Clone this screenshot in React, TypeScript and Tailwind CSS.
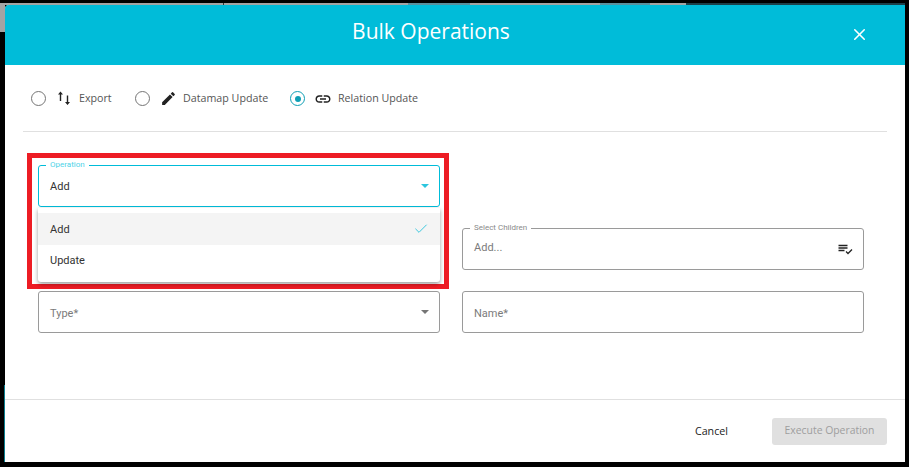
import { Check, X } from "lucide-react";

function Caret({ className }: { className: string }) {
  return (
    <svg width="8" height="4" viewBox="0 0 8 4" className={className}>
      <path d="M0 0h8L4 4z" fill="currentColor" />
    </svg>
  );
}

function Radio({ checked }: { checked?: boolean }) {
  return (
    <span
      className={`flex h-[15px] w-[15px] items-center justify-center rounded-full border ${
        checked ? "border-[#0f9fb5]" : "border-[#757575]"
      }`}
    >
      {checked && <span className="h-[6px] w-[6px] rounded-full bg-[#0f9fb5]" />}
    </span>
  );
}

function RadioItem({
  label,
  checked,
  icon,
  className,
}: {
  label: string;
  checked?: boolean;
  icon: React.ReactNode;
  className: string;
}) {
  return (
    <div className={`flex items-center ${className}`}>
      <Radio checked={checked} />
      <span className="ml-[9px] flex w-[18px] justify-center">{icon}</span>
      <span className="ml-[6px] text-[10.7px] text-[#555555]">{label}</span>
    </div>
  );
}

function Field({
  label,
  text,
  right,
  focused,
  muted,
  textClass,
}: {
  label?: string;
  text: string;
  right?: React.ReactNode;
  focused?: boolean;
  muted?: boolean;
  textClass: string;
}) {
  return (
    <div
      className={`relative flex h-[42px] items-center justify-between rounded-[3px] border pl-[11px] pr-[10px] ${
        focused ? "border-[#00bcd9]" : "border-[#9a9a9a]"
      }`}
    >
      {label && (
        <span
          className={`absolute -top-[6px] left-[7px] bg-white px-[4px] text-[8px] leading-[10px] ${
            focused ? "text-[#4fd3e8]" : "text-[#8a8a8a]"
          }`}
        >
          {label}
        </span>
      )}
      <span className={`text-[11px] ${textClass} ${muted ? "text-[#7b7b7b]" : "text-[#333333]"}`}>{text}</span>
      {right}
    </div>
  );
}

export default function App() {
  return (
    <div className="relative h-[467px] w-[909px] overflow-hidden bg-black font-['Roboto',sans-serif]">
      {/* backdrop showing through */}
      <div className="absolute left-0 top-[3px] flex h-[2px] w-[905px] bg-[#a3a3a3]">
        <span className="ml-[223px] w-[1px] bg-[#333333]" />
        <span className="ml-[184px] w-[62px] bg-[#5a8f9c]" />
        <span className="ml-[130px] w-[50px] bg-[#5a8f9c]" />
        <span className="ml-[36px] w-[219px] bg-[#1d3f48]" />
      </div>
      <div className="absolute left-0 top-[3px] h-[29px] w-[5px] bg-[#a3a3a3]" />
      <div className="absolute left-[4px] top-[385px] h-[77px] w-[1px] bg-[#0c7f90]" />

      <div className="relative ml-[5px] mt-[5px] flex h-[457px] w-[900px] flex-col overflow-hidden rounded-tl-[4px] bg-white">
        <header className="relative flex h-[60px] shrink-0 items-center justify-center bg-[#00bcd9] pb-[6px] pr-[48px] font-['Open_Sans',sans-serif] text-[21px] text-white">
          Bulk Operations
          <X size={19} strokeWidth={2} className="absolute right-[36px] top-[20px] text-white" />
        </header>

        <div className="mx-[18px] flex h-[67px] shrink-0 items-center border-b border-[#e0e0e0] pl-[8px] pt-[1px] font-['Open_Sans',sans-serif]">
          <RadioItem
            label="Export"
            className="w-[104px]"
            icon={
              <svg width="14" height="15" viewBox="0 0 14 15">
                <path
                  d="M3.5 .5 1 3.6h1.8V10h1.4V3.6H6zM10.5 14 13 10.9h-1.8V4.5H9.8v6.4H8z"
                  fill="#222222"
                />
              </svg>
            }
          />
          <RadioItem
            label="Datamap Update"
            className="w-[155px]"
            icon={
              <svg width="17" height="17" viewBox="0 0 24 24" fill="#222222">
                <path d="M3 17.25V21h3.75L17.81 9.94l-3.75-3.75L3 17.25zM20.71 7.04a1 1 0 0 0 0-1.41l-2.34-2.34a1 1 0 0 0-1.41 0l-1.83 1.83 3.75 3.75 1.83-1.83z" />
              </svg>
            }
          />
          <RadioItem
            label="Relation Update"
            checked
            className=""
            icon={
              <svg width="18" height="18" viewBox="0 0 24 24" fill="#222222">
                <path d="M3.9 12c0-1.71 1.39-3.1 3.1-3.1h4V7H7c-2.76 0-5 2.24-5 5s2.24 5 5 5h4v-1.9H7c-1.71 0-3.1-1.39-3.1-3.1zM8 13h8v-2H8v2zm9-6h-4v1.9h4c1.71 0 3.1 1.39 3.1 3.1s-1.39 3.1-3.1 3.1h-4V17h4c2.76 0 5-2.24 5-5s-2.24-5-5-5z" />
              </svg>
            }
          />
        </div>

        <div className="grid grid-cols-[402px_402px] gap-x-[22px] gap-y-[21px] pl-[33px] pt-[33px]">
          <Field
            label="Operation"
            text="Add"
            focused
            textClass="pt-[2px]"
            right={<Caret className="text-[#2cc6de]" />}
          />
          <div />
          <div className="h-[42px]" />
          <Field
            label="Select Children"
            text="Add..."
            muted
            textClass="pb-[2px]"
            right={
              <svg width="16" height="14" viewBox="-1 0 16 14" fill="none">
                <path d="M0.5 3.5h9M0.5 6h9M0.5 8.5h6" stroke="#222222" strokeWidth="1.4" />
                <path d="M8 9.5l2 2 4-4" stroke="#222222" strokeWidth="1.3" />
              </svg>
            }
          />
          <Field text="Type*" muted textClass="pt-[4px]" right={<Caret className="text-[#757575]" />} />
          <Field text="Name*" muted textClass="pt-[4px]" />
        </div>

        <footer className="mt-auto flex h-[63px] items-center justify-end border-t border-[#e0e0e0] pr-[18px] font-['Open_Sans',sans-serif]">
          <span className="mr-[44px] text-[10.7px] text-[#222222]">Cancel</span>
          <span className="flex h-[27px] w-[115px] items-center justify-center rounded-[3px] bg-[#e0e0e0] text-[10.4px] text-[#9e9e9e]">
            Execute Operation
          </span>
        </footer>

        {/* highlight box and open dropdown sit over the form */}
        <div className="absolute left-[22px] top-[148px] h-[136px] w-[422px] border-[5px] border-[#ed1c24]" />
        <div className="absolute left-[33px] top-[203px] h-[74px] w-[402px] rounded-b-[3px] bg-white pt-[5px] text-[11px] text-[#333333] shadow-[0_2px_4px_rgba(0,0,0,0.4)]">
          <div className="flex h-[32px] items-center justify-between bg-[#f4f4f4] pl-[12px] pr-[11px]">
            <span className="pt-[2px]">Add</span>
            <Check size={16} strokeWidth={1.5} className="text-[#3cc8de]" />
          </div>
          <div className="flex h-[31px] items-center pl-[12px]">
            <span className="pt-[2px]">Update</span>
          </div>
        </div>
      </div>
    </div>
  );
}
